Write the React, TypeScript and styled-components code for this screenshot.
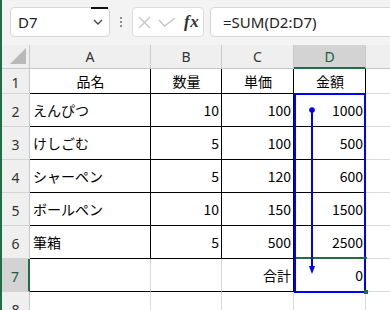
import React from "react";
import styled, { createGlobalStyle } from "styled-components";

const Global = createGlobalStyle`
  html, body { margin: 0; padding: 0; background: #ffffff; }
  body { font-family: "Noto Sans CJK JP", "Noto Sans", sans-serif; }
`;

const GREEN = "#1f6e43";
const GRID = "#d9d9d9";
const HEAD_LINE = "#c8c8c8";
const BLACK = "#000000";
const BLUE = "#0000ff";

const Root = styled.div`
  position: relative;
  width: 388px;
  height: 310px;
  overflow: hidden;
  border-left: 2px solid ${GREEN};
  display: flex;
  flex-direction: column;
  background: #ffffff;
`;

const TopBar = styled.div`
  height: 45px;
  flex: none;
  background: #f3f3f3;
  display: flex;
  align-items: flex-start;
  padding: 7px 0 0 8px;
  box-sizing: border-box;
  overflow: hidden;
`;

const NameBox = styled.div`
  position: relative;
  flex: none;
  width: 100px;
  height: 30px;
  box-sizing: border-box;
  background: #ffffff;
  border: 1px solid #d6d6d6;
  border-radius: 4px;
  display: flex;
  align-items: center;
  justify-content: space-between;
  padding: 0 6px 0 7px;
  font-family: "Noto Sans", sans-serif;
  font-size: 15px;
  color: #222;
`;

const NameTick = styled.span`
  position: absolute;
  top: -1px;
  right: 1px;
  width: 17px;
  height: 2px;
  background: #111;
`;

const Grip = styled.div`
  flex: none;
  width: 22px;
  height: 30px;
  display: flex;
  align-items: center;
  justify-content: center;
`;

const FxBox = styled.div`
  flex: none;
  width: 72px;
  height: 30px;
  box-sizing: border-box;
  background: #ffffff;
  border: 1px solid #dcdcdc;
  border-radius: 4px;
  display: flex;
  align-items: center;
  padding-left: 5px;
  gap: 7px;
`;

const FxLabel = styled.span`
  font-family: "Liberation Serif", serif;
  font-style: italic;
  font-weight: bold;
  font-size: 17px;
  color: #333;
  margin-left: 1px;
  letter-spacing: 0.5px;
`;

const FormulaBox = styled.div`
  flex: none;
  margin-left: 6px;
  width: 200px;
  height: 30px;
  box-sizing: border-box;
  background: #ffffff;
  border: 1px solid #d6d6d6;
  border-radius: 4px;
  display: flex;
  align-items: center;
  padding-left: 12px;
  font-family: "Noto Sans", sans-serif;
  font-size: 15px;
  color: #222;
`;

const Sheet = styled.div`
  flex: none;
  display: grid;
  grid-template-columns: 28px 121px 71px 72px 72px 1fr;
  grid-template-rows: 24px 25px repeat(7, 33px);
`;

const Corner = styled.div`
  background: #efefef;
  box-sizing: border-box;
  border-right: 1px solid ${HEAD_LINE};
  border-bottom: 1px solid ${HEAD_LINE};
  display: flex;
  align-items: flex-end;
  justify-content: flex-end;
  padding: 0 3px 4px 0;
`;

const Triangle = styled.div`
  width: 16px;
  height: 16px;
  background: #b9b9b9;
  clip-path: polygon(100% 0, 100% 100%, 0 100%);
`;

const ColHead = styled.div<{ $sel?: boolean; $last?: boolean }>`
  box-sizing: border-box;
  background: ${(p) => (p.$sel ? "#d3d3d3" : "#efefef")};
  border-right: ${(p) => (p.$last ? "none" : `1px solid ${HEAD_LINE}`)};
  border-bottom: ${(p) => (p.$sel ? `2px solid ${GREEN}` : `1px solid ${HEAD_LINE}`)};
  display: flex;
  align-items: center;
  justify-content: center;
  font-family: "Noto Sans", sans-serif;
  font-size: 14px;
  color: ${(p) => (p.$sel ? "#1b5e37" : "#333")};
`;

const RowHead = styled.div<{ $sel?: boolean }>`
  box-sizing: border-box;
  background: ${(p) => (p.$sel ? "#d3d3d3" : "#efefef")};
  border-right: ${(p) => (p.$sel ? `2px solid ${GREEN}` : `1px solid ${HEAD_LINE}`)};
  border-bottom: 1px solid #d4d4d4;
  display: flex;
  align-items: center;
  justify-content: center;
  padding-top: 2px;
  font-family: "Noto Sans", sans-serif;
  font-size: 14px;
  color: ${(p) => (p.$sel ? "#1b5e37" : "#333")};
`;

const Cell = styled.div<{
  $align?: "left" | "center" | "right";
  $right?: string;
  $bottom?: string;
}>`
  box-sizing: border-box;
  border-right: ${(p) => (p.$right ? `1px solid ${p.$right}` : "none")};
  border-bottom: ${(p) => (p.$bottom ? `1px solid ${p.$bottom}` : "none")};
  display: flex;
  align-items: center;
  justify-content: ${(p) =>
    p.$align === "right" ? "flex-end" : p.$align === "center" ? "center" : "flex-start"};
  padding: 0 2px 0 3px;
  font-family: "Noto Sans CJK JP", sans-serif;
  font-size: 14px;
  color: #000;
  white-space: nowrap;
  overflow: hidden;
`;

const Selection = styled.div`
  position: absolute;
  left: 292px;
  top: 93px;
  width: 72px;
  height: 200px;
  box-sizing: border-box;
  border: 2px solid ${BLUE};
  pointer-events: none;
`;

const ActiveTop = styled.div`
  position: absolute;
  left: 294px;
  top: 257px;
  width: 71px;
  height: 2px;
  background: ${GREEN};
`;

const FillHandle = styled.div`
  position: absolute;
  left: 362px;
  top: 290px;
  width: 4px;
  height: 4px;
  background: ${GREEN};
`;

const Arrow = styled.svg`
  position: absolute;
  left: 306px;
  top: 105px;
  pointer-events: none;
`;

type Row = [string, string, string, string];

const rows: Row[] = [
  ["えんぴつ", "10", "100", "1000"],
  ["けしごむ", "5", "100", "500"],
  ["シャーペン", "5", "120", "600"],
  ["ボールペン", "10", "150", "1500"],
  ["筆箱", "5", "500", "2500"],
];

export default function App() {
  return (
    <>
      <Global />
      <Root>
        <TopBar>
          <NameBox>
            <span>D7</span>
            <svg width="10" height="6" viewBox="0 0 10 6">
              <path d="M1 1 L5 5 L9 1" fill="none" stroke="#444" strokeWidth="1.3" />
            </svg>
            <NameTick />
          </NameBox>
          <Grip>
            <svg width="2" height="10" viewBox="0 0 2 10">
              <rect x="0" y="0" width="2" height="2" fill="#8c8c8c" />
              <rect x="0" y="4" width="2" height="2" fill="#8c8c8c" />
              <rect x="0" y="8" width="2" height="2" fill="#8c8c8c" />
            </svg>
          </Grip>
          <FxBox>
            <svg width="13" height="13" viewBox="0 0 13 13">
              <path d="M1 1 L12 12 M12 1 L1 12" stroke="#c4c4c4" strokeWidth="1.3" fill="none" />
            </svg>
            <svg width="18" height="10" viewBox="0 0 18 10">
              <path d="M1 3 L6.5 9 L17 1" stroke="#c4c4c4" strokeWidth="1.3" fill="none" />
            </svg>
            <FxLabel>fx</FxLabel>
          </FxBox>
          <FormulaBox>=SUM(D2:D7)</FormulaBox>
        </TopBar>
        <Sheet>
          <Corner>
            <Triangle />
          </Corner>
          <ColHead>A</ColHead>
          <ColHead>B</ColHead>
          <ColHead>C</ColHead>
          <ColHead $sel>D</ColHead>
          <ColHead $last />

          <RowHead>1</RowHead>
          <Cell $align="center" $right={BLACK} $bottom={BLACK}>品名</Cell>
          <Cell $align="center" $right={BLACK} $bottom={BLACK}>数量</Cell>
          <Cell $align="center" $right={BLACK} $bottom={BLACK}>単価</Cell>
          <Cell $align="center" $right={BLACK} $bottom={BLACK}>金額</Cell>
          <Cell $bottom={GRID} />

          {rows.map((r, i) => (
            <React.Fragment key={i}>
              <RowHead>{i + 2}</RowHead>
              <Cell $right={BLACK} $bottom={BLACK}>{r[0]}</Cell>
              <Cell $align="right" $right={BLACK} $bottom={BLACK}>{r[1]}</Cell>
              <Cell $align="right" $right={BLACK} $bottom={BLACK}>{r[2]}</Cell>
              <Cell $align="right" $right={BLACK} $bottom={BLACK}>{r[3]}</Cell>
              <Cell $bottom={GRID} />
            </React.Fragment>
          ))}

          <RowHead $sel>7</RowHead>
          <Cell $right={GRID} $bottom={BLACK} />
          <Cell $right={GRID} $bottom={BLACK} />
          <Cell $align="right" $right={BLACK} $bottom={BLACK}>合計</Cell>
          <Cell $align="right" $right={BLACK} $bottom={BLACK}>0</Cell>
          <Cell $bottom={GRID} />

          <RowHead>8</RowHead>
          <Cell $right={GRID} />
          <Cell $right={GRID} />
          <Cell $right={GRID} />
          <Cell $right={GRID} />
          <Cell />
        </Sheet>
        <Selection />
        <ActiveTop />
        <FillHandle />
        <Arrow width="8" height="172" viewBox="0 0 8 172">
          <circle cx="4" cy="5" r="2.8" fill={BLUE} />
          <line x1="4" y1="5" x2="4" y2="163" stroke={BLUE} strokeWidth="2" />
          <polygon points="1,161 7,161 4,169" fill={BLUE} />
        </Arrow>
      </Root>
    </>
  );
}
